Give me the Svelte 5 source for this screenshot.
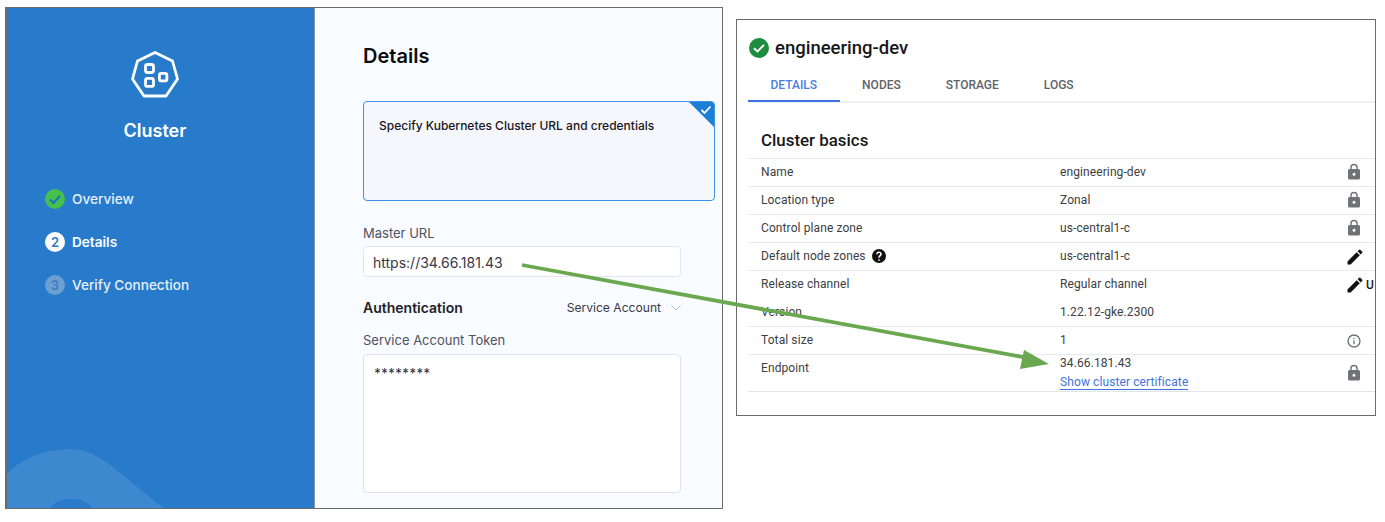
<script>
  const steps = [
    { label: 'Overview', kind: 'done' },
    { label: 'Details', kind: 'active', n: 2 },
    { label: 'Verify Connection', kind: 'todo', n: 3 }
  ];
  const tabs = ['DETAILS', 'NODES', 'STORAGE', 'LOGS'];
  const rows = [
    { name: 'Name', value: 'engineering-dev', icon: 'lock' },
    { name: 'Location type', value: 'Zonal', icon: 'lock' },
    { name: 'Control plane zone', value: 'us-central1-c', icon: 'lock' },
    { name: 'Default node zones', value: 'us-central1-c', icon: 'edit', help: true },
    { name: 'Release channel', value: 'Regular channel', icon: 'edit', extra: 'U' },
    { name: 'Version', value: '1.22.12-gke.2300', icon: '', noline: true },
    { name: 'Total size', value: '1', icon: 'info' },
    { name: 'Endpoint', value: '34.66.181.43', icon: 'lock', link: 'Show cluster certificate' }
  ];
</script>

<div class="page">
  <section class="wizard">
    <aside class="side">
      <svg class="logo" width="50" height="50" viewBox="0 0 50 50" fill="none" stroke="#fff" stroke-width="2.800" stroke-linejoin="round">
        <path d="M25 2.500 42.500 11 47.500 29 36 46H14L2.500 29 7.500 11Z" />
        <rect x="15.500" y="14.500" width="8" height="8" rx="2" />
        <rect x="29.400" y="23.400" width="7.500" height="7.500" rx="2" />
        <rect x="15.500" y="28.400" width="8" height="8" rx="2" />
      </svg>
      <h2>Cluster</h2>
      <ul class="steps">
        {#each steps as s}
          <li class={s.kind}>
            <span class="dot">
              {#if s.kind === 'done'}
                <svg width="20" height="20" viewBox="0 0 20 20"><circle cx="10" cy="10" r="10" fill="#46c04d" /><path d="M5 10.500 8.500 14 15 6.800" fill="none" stroke="#1d6fc4" stroke-width="2" /></svg>
              {:else}
                {s.n}
              {/if}
            </span>
            {s.label}
          </li>
        {/each}
      </ul>
      <svg class="wave" width="308" height="70" viewBox="0 0 308 70">
        <path d="M0 36C14 20 40 11 64 11 92 11 112 36 157 70H0Z" fill="#3d88ce" />
        <path d="M43 70C52 60 60 61 64 61 70 61 78 62 86 70Z" fill="#277bca" />
      </svg>
    </aside>
    <main class="form">
      <h1>Details</h1>
      <div class="card">
        <span class="corner"></span>
        <svg class="tick" width="12" height="10" viewBox="0 0 12 10"><path d="M1.500 5 4.500 8 10.500 1.500" fill="none" stroke="#fff" stroke-width="1.800" /></svg>
        Specify Kubernetes Cluster URL and credentials
      </div>
      <div class="label first">Master URL</div>
      <div class="input">https://34.66.181.43</div>
      <div class="auth">
        <strong>Authentication</strong>
        <span class="select">Service Account
          <svg width="10" height="6" viewBox="0 0 10 6"><path d="M.5.5 5 5 9.500.5" fill="none" stroke="#b9bccb" stroke-width="1" /></svg>
        </span>
      </div>
      <div class="label">Service Account Token</div>
      <div class="textarea">********</div>
    </main>
  </section>

  <section class="gke">
    <div class="title">
      <svg width="20" height="20" viewBox="0 0 20 20"><circle cx="10" cy="10" r="10" fill="#1e8e3e" /><path d="M5 10.200 8.500 13.500 15 6.800" fill="none" stroke="#fff" stroke-width="1.900" /></svg>
      engineering-dev
    </div>
    <nav class="tabs">
      {#each tabs as t, i}
        <span class:on={i === 0}>{t}</span>
      {/each}
    </nav>
    <h3>Cluster basics</h3>
    <div class="table">
      {#each rows as r}
        <div class="row" class:noline={r.noline} class:tall={r.link}>
          <div class="name">{r.name}
            {#if r.help}
              <svg class="help" width="14" height="14" viewBox="0 0 24 24"><path d="M12 0a12 12 0 1 0 0 24 12 12 0 0 0 0-24Zm1.300 20h-2.600v-2.600h2.600Zm2.700-9c-1 1.300-2.500 1.700-2.700 4.200h-2.600c0-3.600 1.800-4.400 2.800-5.500.8-.9.500-3-1.500-3-1.300 0-2.300 1-2.300 2.300H7.100c0-2.700 2.200-4.900 4.900-4.900 4 0 6 4.200 4 6.900Z" fill="#111" /></svg>
            {/if}
          </div>
          <div class="value">
            {r.value}
            {#if r.link}<a href="#top">{r.link}</a>{/if}
          </div>
          <div class="act">
            {#if r.icon === 'lock'}
              <svg width="18" height="18" viewBox="0 0 24 24"><path d="M18 8h-1V6A5 5 0 0 0 7 6v2H6a2 2 0 0 0-2 2v10a2 2 0 0 0 2 2h12a2 2 0 0 0 2-2V10a2 2 0 0 0-2-2Zm-6 9a2 2 0 1 1 0-4 2 2 0 0 1 0 4Zm3.100-9H8.900V6a3.100 3.100 0 0 1 6.200 0Z" fill="#6f7276" /></svg>
            {:else if r.icon === 'edit'}
              <svg width="20" height="20" viewBox="0 0 24 24"><path d="M3 17.250V21h3.750L17.800 9.940l-3.750-3.750ZM20.700 7.040a1 1 0 0 0 0-1.410l-2.340-2.340a1 1 0 0 0-1.410 0l-1.830 1.830 3.750 3.750Z" fill="#111" /></svg>
              {#if r.extra}<span class="extra">{r.extra}</span>{/if}
            {:else if r.icon === 'info'}
              <svg class="info" width="16" height="16" viewBox="0 0 24 24"><path d="M11 7h2v2h-2Zm0 4h2v6h-2Zm1-9a10 10 0 1 0 0 20 10 10 0 0 0 0-20Zm0 18a8 8 0 1 1 0-16 8 8 0 0 1 0 16Z" fill="#6f7276" /></svg>
            {/if}
          </div>
        </div>
      {/each}
    </div>
  </section>

  <svg class="arrow" width="1385" height="522" viewBox="0 0 1385 522">
    <path d="M522 265 1028 358" stroke="#6aa84f" stroke-width="3.800" fill="none" />
    <path d="M1049 364 1024 350 1020 369Z" fill="#6aa84f" />
  </svg>
</div>

<style>
  :global(body) { margin: 0; background: #fff; }
  .page {
    position: relative;
    display: flex;
    align-items: flex-start;
    gap: 13px;
    width: 1385px;
    height: 522px;
    padding: 7px 0 0 5px;
    box-sizing: border-box;
    overflow: hidden;
    font-family: Inter, "Liberation Sans", sans-serif;
  }
  .wizard {
    display: flex;
    width: 718px;
    height: 502px;
    box-sizing: border-box;
    border: 1px solid #6b6b6b;
    border-left-width: 2px;
    flex: none;
  }
  .side {
    position: relative;
    width: 308px;
    flex: none;
    background: #277bca;
    color: #fff;
    overflow: hidden;
    display: flex;
    flex-direction: column;
    align-items: center;
    padding: 42px 11px 0 0;
    box-sizing: border-box;
    border-right: 1px solid #8b9299;
  }
  .logo { display: block; }
  h2 { margin: 19px 0 0; font-size: 18px; line-height: 24px; font-weight: 600; }
  .steps {
    list-style: none;
    margin: 46px 0 0;
    padding: 0 0 0 38px;
    align-self: stretch;
    display: flex;
    flex-direction: column;
    gap: 23px;
  }
  .steps li {
    display: flex;
    align-items: center;
    gap: 7px;
    height: 20px;
    font-size: 13.600px;
    font-weight: 500;
    color: #e6f0fa;
  }
  .steps li.active { font-weight: 600; color: #fff; }
  .dot {
    width: 20px;
    height: 20px;
    border-radius: 50%;
    display: flex;
    align-items: center;
    justify-content: center;
    font-size: 13px;
    font-weight: 600;
  }
  .active .dot { background: #fff; color: #277bca; }
  .todo .dot { background: #6c9fd2; color: #3a7cc0; }
  .wave { position: absolute; left: 0; bottom: 0; }
  .form {
    flex: 1;
    background: #f8fbff;
    padding: 36px 7px 0 48px;
    box-sizing: border-box;
    overflow: hidden;
  }
  h1 { margin: 0; font-size: 20px; line-height: 24px; font-weight: 600; color: #0b0b0d; }
  .card {
    position: relative;
    width: 352px;
    height: 100px;
    margin-top: 33px;
    box-sizing: border-box;
    border: 1px solid #3b93e2;
    border-radius: 4px;
    background: #f6f7fc;
    padding: 15px 15px;
    font-size: 12px;
    line-height: 18px;
    font-weight: 500;
    color: #16161c;
    overflow: hidden;
  }
  .corner {
    position: absolute;
    top: 0;
    right: 0;
    border-style: solid;
    border-width: 0 25px 25px 0;
    border-color: transparent #1b7fd6 transparent transparent;
  }
  .tick { position: absolute; top: 3px; right: 2px; }
  .label { margin-top: 15px; font-size: 13px; line-height: 18px; color: #4f5162; }
  .label.first { margin-top: 23px; }
  .input {
    width: 318px;
    height: 31px;
    margin-top: 4px;
    box-sizing: border-box;
    background: #fff;
    border: 1px solid #e4e4ef;
    border-radius: 4px;
    padding: 0 9px;
    font-size: 14px;
    line-height: 31px;
    color: #383946;
  }
  .auth {
    width: 318px;
    display: flex;
    justify-content: space-between;
    align-items: center;
    margin-top: 21px;
    height: 18px;
  }
  .auth strong { font-size: 14px; font-weight: 600; color: #22222a; }
  .select { font-size: 12.100px; color: #383946; display: flex; align-items: center; gap: 10px; margin-top: 1px; }
  .textarea {
    width: 318px;
    height: 139px;
    margin-top: 5px;
    box-sizing: border-box;
    background: #fff;
    border: 1px solid #e0e0ee;
    border-radius: 4px;
    padding: 9px 10px;
    font-size: 13.500px;
    line-height: 18px;
    font-weight: 500;
    color: #383946;
  }
  .gke {
    width: 640px;
    height: 397px;
    margin-top: 12px;
    flex: none;
    box-sizing: border-box;
    border: 1px solid #6b6b6b;
    background: #fff;
    overflow: hidden;
    padding: 0 0 0 11px;
    font-family: Roboto, "Liberation Sans", sans-serif;
  }
  .title {
    display: flex;
    align-items: center;
    gap: 6px;
    height: 24px;
    margin: 16px 0 0 1px;
    font-size: 18.500px;
    font-weight: 500;
    color: #17181a;
  }
  .tabs {
    display: flex;
    height: 29px;
    margin-top: 12px;
    border-bottom: 2px solid #eef0f2;
  }
  .tabs span {
    padding: 0 22.500px;
    font-size: 12px;
    font-weight: 500;
    line-height: 26px;
    color: #5f6368;
    height: 30px;
    box-sizing: border-box;
  }
  .tabs span.on { color: #4a7ee0; border-bottom: 2px solid #3f74e0; }
  h3 {
    margin: 27px 0 0 13px;
    font-size: 16.900px;
    line-height: 20px;
    font-weight: 500;
    color: #17181a;
  }
  .table { margin-top: 8px; }
  .row {
    display: grid;
    grid-template-columns: 299px 285px 1fr;
    height: 28px;
    box-sizing: border-box;
    border-top: 1px solid #e9eaec;
    padding-left: 13px;
    font-size: 12px;
    line-height: 27px;
    color: #3c4043;
    letter-spacing: .1px;
  }
  .row.noline { border-top-color: transparent; }
  .row.tall { height: 38px; border-bottom: 1px solid #e3e4e6; }
  .row.tall .value { line-height: 17px; }
  .name { display: flex; align-items: flex-start; gap: 4px; }
  .help { margin: 6px 0 0 2px; }
  .value a {
    display: block;
    width: fit-content;
    margin-top: 3px;
    color: #3f74d8;
    text-decoration: none;
    border-bottom: 1px solid #3f74d8;
    line-height: 14px;
  }
  .act { display: flex; align-items: flex-start; gap: 1px; padding-top: 4px; line-height: 20px; white-space: nowrap; }
  .row.tall .act { padding-top: 9px; }
  .info { margin: 2px 0 0 1px; }
  .extra { font-weight: 500; color: #1a1a1a; font-size: 12px; }
  .arrow { position: absolute; left: 0; top: 0; pointer-events: none; }
</style>
